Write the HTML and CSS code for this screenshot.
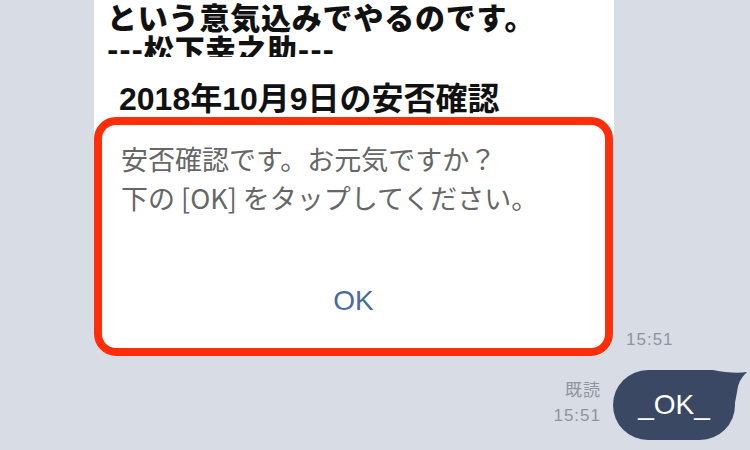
FILE: index.html
```html
<!DOCTYPE html>
<html lang="ja">
<head>
<meta charset="utf-8">
<link rel="stylesheet" href="styles.css">
</head>
<body>
<div class="chat">
  <div class="row in">
    <div class="card">
      <div class="pic"><p>という意気込みでやるのです。<br>---松下幸之助---</p></div>
      <h2 class="title">2018年10月9日の安否確認</h2>
      <div class="confirm">
        <p class="msg">安否確認です。お元気ですか？<br>下の [OK] をタップしてください。</p>
        <div class="ok">OK</div>
      </div>
    </div>
    <span class="time">15:51</span>
  </div>
  <div class="row out">
    <div class="meta"><span>既読</span><span>15:51</span></div>
    <div class="bubble">_OK_<svg class="tail" width="56" height="40" viewBox="0 0 56 40"><path d="M0 0 L20 0 Q40 4 54 2 Q45 10 44 22 L41 38 L0 38 Z" fill="#3a4864"/></svg></div>
  </div>
</div>
</body>
</html>
```
FILE: styles.css
```css
html, body {
  margin: 0;
  padding: 0;
}
body {
  background: #d8dce5;
  width: 750px;
  height: 450px;
  overflow: hidden;
  font-family: "Liberation Sans", "Noto Sans CJK JP", sans-serif;
}
.row {
  display: flex;
  align-items: flex-end;
}
.row.in {
  padding-left: 94px;
  gap: 12px;
}
.card {
  width: 520px;
  background: #fff;
  border-radius: 0 0 22px 22px;
}
.pic {
  height: 57px;
  overflow: hidden;
  padding-left: 13px;
}
.pic p {
  margin: 0;
  font-family: "Noto Sans CJK JP", sans-serif;
  font-weight: 900;
  font-size: 30px;
  line-height: 32px;
  letter-spacing: 0.8px;
  color: #111;
  white-space: nowrap;
}
.title {
  margin: 24px 0 0;
  padding-left: 25px;
  font-weight: 700;
  font-size: 32px;
  line-height: 36px;
  color: #111;
  white-space: nowrap;
}
.confirm {
  box-sizing: border-box;
  width: 519px;
  height: 239px;
  border: 8px solid #ff2d0a;
  border-radius: 22px;
  background: #fff;
}
.msg {
  margin: 0;
  padding: 14px 0 0 19px;
  font-family: "Noto Sans CJK JP", sans-serif;
  font-weight: 400;
  font-size: 27px;
  line-height: 39px;
  color: #666;
  white-space: nowrap;
}
.ok {
  margin-top: 64px;
  text-align: center;
  font-size: 28px;
  line-height: 40px;
  color: #4a6a9a;
}
.time {
  margin-bottom: 6px;
  font-size: 17px;
  line-height: 20px;
  letter-spacing: 1px;
  color: #8e949e;
}
.row.out {
  margin-top: 14px;
  justify-content: flex-end;
  padding-right: 15px;
  gap: 12px;
}
.meta {
  display: flex;
  flex-direction: column;
  align-items: flex-end;
  margin-bottom: 12px;
  font-size: 17px;
  line-height: 25px;
  letter-spacing: 1px;
  color: #8e949e;
}
.bubble {
  position: relative;
  width: 122px;
  height: 70px;
  border-radius: 35px;
  background: #3a4864;
  color: #fff;
  font-size: 28px;
  display: flex;
  align-items: center;
  justify-content: center;
}
.tail {
  position: absolute;
  left: 80px;
  top: 0;
}
```
